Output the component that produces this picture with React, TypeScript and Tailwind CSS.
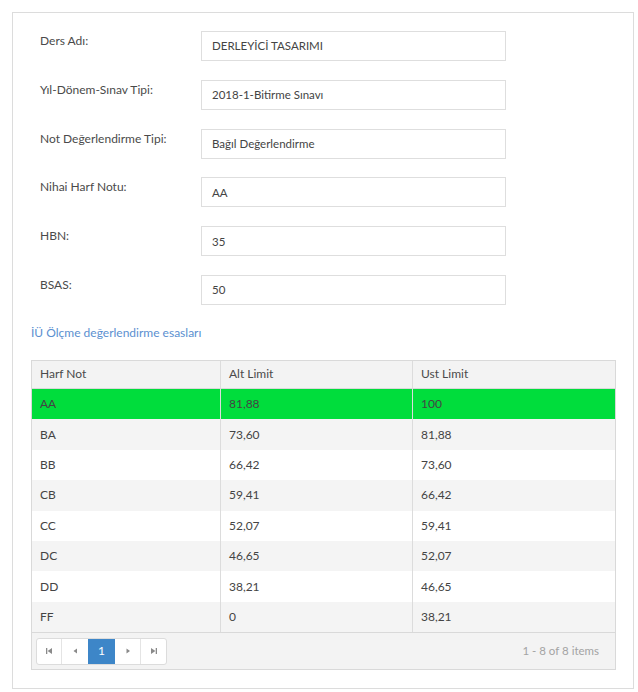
import React from 'react';

const fields = [
  { label: 'Ders Adı:', value: 'DERLEYİCİ TASARIMI' },
  { label: 'Yıl-Dönem-Sınav Tipi:', value: '2018-1-Bitirme Sınavı' },
  { label: 'Not Değerlendirme Tipi:', value: 'Bağıl Değerlendirme' },
  { label: 'Nihai Harf Notu:', value: 'AA' },
  { label: 'HBN:', value: '35' },
  { label: 'BSAS:', value: '50' },
];

const rows = [
  ['AA', '81,88', '100'],
  ['BA', '73,60', '81,88'],
  ['BB', '66,42', '73,60'],
  ['CB', '59,41', '66,42'],
  ['CC', '52,07', '59,41'],
  ['DC', '46,65', '52,07'],
  ['DD', '38,21', '46,65'],
  ['FF', '0', '38,21'],
];

const PagerIcon = ({ kind }: { kind: 'first' | 'prev' | 'next' | 'last' }) => (
  <svg width="8" height="8" viewBox="0 0 8 8" fill="#8a8a8a">
    {kind === 'first' && (
      <>
        <rect x="1" y="1" width="1.3" height="6" />
        <path d="M7 1v6L2.6 4z" />
      </>
    )}
    {kind === 'prev' && <path d="M6 1.5v5L2.5 4z" />}
    {kind === 'next' && <path d="M2.5 1.5v5L6 4z" />}
    {kind === 'last' && (
      <>
        <path d="M1 1v6l4.4-3z" />
        <rect x="5.7" y="1" width="1.3" height="6" />
      </>
    )}
  </svg>
);

export default function App() {
  return (
    <div className="bg-white p-3 font-['Lato','Liberation_Sans',sans-serif] text-[12px]">
      <div className="w-[622px] h-[677px] border border-[#dcdcdc] px-[18px] pt-[18px]">
        <div className="pl-[9px] flex flex-col gap-[18.8px]">
          {fields.map((f) => (
            <div key={f.label} className="flex">
              <div className="w-[161px] leading-[19px] text-[#4a4a4a]">{f.label}</div>
              <div className="w-[305px] h-[30px] border border-[#dedede] flex items-center pl-[10px] text-[#444] text-[11.5px]">
                {f.value}
              </div>
            </div>
          ))}
        </div>

        <div className="mt-[18px] leading-5 text-[#5b8fd0]">İÜ Ölçme değerlendirme esasları</div>

        <div className="mt-[17px] w-[585px] border border-[#d9d9d9] text-[12px]">
          <div className="flex h-[28px] bg-[#f3f3f3] border-b border-[#d9d9d9] text-[#4a4a4a]">
            <div className="w-[189px] border-r border-[#dcdcdc] pl-[8px] flex items-center">Harf Not</div>
            <div className="w-[192px] border-r border-[#dcdcdc] pl-[8px] flex items-center">Alt Limit</div>
            <div className="flex-1 pl-[8px] flex items-center">Ust Limit</div>
          </div>
          {rows.map((r, i) => (
            <div
              key={r[0]}
              className={
                'flex h-[30.4px] text-[#444] ' +
                (i === 0 ? 'bg-[#00dd3c]' : i % 2 === 1 ? 'bg-[#f4f4f4]' : 'bg-white')
              }
            >
              <div className="w-[189px] border-r border-[#dcdcdc] pl-[8px] flex items-center">{r[0]}</div>
              <div className="w-[192px] border-r border-[#dcdcdc] pl-[8px] flex items-center">{r[1]}</div>
              <div className="flex-1 pl-[8px] flex items-center">{r[2]}</div>
            </div>
          ))}
          <div className="flex items-center justify-between h-[37px] bg-[#f3f3f3] border-t border-[#d9d9d9] pl-[4px] pr-[16px]">
            <div className="flex h-[27px] bg-white border border-[#dcdcdc] rounded-[3px] overflow-hidden">
              <div className="w-[25px] flex items-center justify-center border-r border-[#e4e4e4]">
                <PagerIcon kind="first" />
              </div>
              <div className="w-[26px] flex items-center justify-center">
                <PagerIcon kind="prev" />
              </div>
              <div className="w-[27px] flex items-center justify-center bg-[#3d86c8] text-white text-[12px]">1</div>
              <div className="w-[26px] flex items-center justify-center border-r border-[#e4e4e4]">
                <PagerIcon kind="next" />
              </div>
              <div className="w-[25px] flex items-center justify-center">
                <PagerIcon kind="last" />
              </div>
            </div>
            <div className="text-[#a3a3a3] text-[11.5px]">1 - 8 of 8 items</div>
          </div>
        </div>
      </div>
    </div>
  );
}
